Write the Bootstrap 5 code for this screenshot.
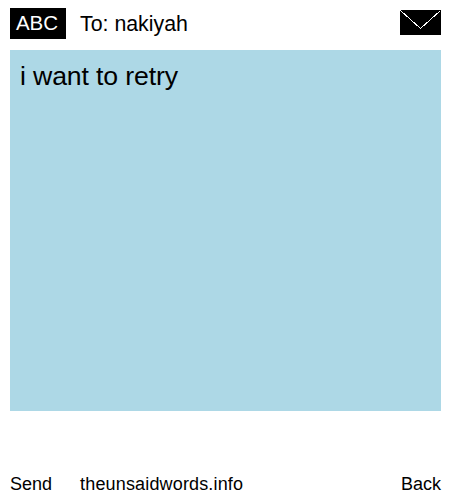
<!DOCTYPE html>
<html lang="en">
<head>
<meta charset="utf-8">
<title>To: nakiyah</title>
<link href="https://cdn.jsdelivr.net/npm/bootstrap@5.3.0/dist/css/bootstrap.min.css" rel="stylesheet">
<style>
html, body { height: 500px; overflow: hidden; }
body { font-family: "Liberation Sans", Arial, sans-serif; color: #000; background: #fff; }
.page-shell { height: 500px; padding: 8px 9px 5px 10px; }
.top-bar { height: 31px; margin-bottom: 11px; }
.mode-box { width: 56px; height: 31px; padding-right: 2px; background: #000; color: #fff; font-size: 20.5px; line-height: 30px; text-align: center; }
.to-line { font-size: 21.33px; line-height: 30px; margin-left: 14px; }
.env-icon { display: block; width: 41px; height: 25px; margin-bottom: 2px; }
.msg-panel { height: 361px; background: #add8e6; padding: 8px 10px; font-size: 26.67px; line-height: 36px; letter-spacing: -.14px; }
.foot-bar { font-size: 18px; line-height: 22px; margin-top: auto; }
.foot-bar a { color: #000; text-decoration: none; }
.site-link { margin-left: 28px; letter-spacing: .16px; }
</style>
</head>
<body>
<div class="page-shell d-flex flex-column">
  <div class="top-bar d-flex align-items-center">
    <div class="mode-box">ABC</div>
    <div class="to-line flex-grow-1">To: nakiyah</div>
    <svg class="env-icon" viewBox="0 0 41 25" aria-hidden="true" shape-rendering="crispEdges">
      <rect width="41" height="25" fill="#000"/>
      <path d="M0.5 0.5 L20.5 18.5 L40.5 0.5" fill="none" stroke="#fff" stroke-width="1"/>
    </svg>
  </div>
  <div class="msg-panel">i want to retry</div>
  <div class="foot-bar d-flex">
    <a href="#">Send</a>
    <a href="#" class="site-link flex-grow-1">theunsaidwords.info</a>
    <a href="#">Back</a>
  </div>
</div>
<script src="https://cdn.jsdelivr.net/npm/bootstrap@5.3.0/dist/js/bootstrap.bundle.min.js"></script>
</body>
</html>
